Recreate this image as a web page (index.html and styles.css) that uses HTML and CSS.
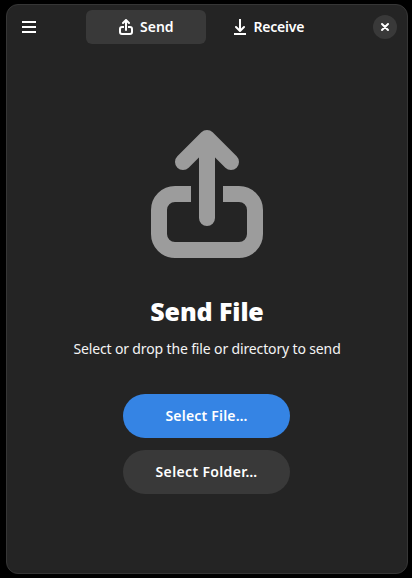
FILE: index.html
```html
<!DOCTYPE html>
<html lang="en">
<head>
<meta charset="utf-8">
<title>Send File</title>
<link rel="stylesheet" href="styles.css">
</head>
<body>
<svg width="0" height="0" class="defs">
  <symbol id="share" viewBox="0 0 16 16">
    <g fill="none" stroke="currentColor" stroke-width="2">
      <path d="M8 11V1M5 4l3-3 3 3" stroke-linecap="round" stroke-linejoin="round"/>
      <path d="M6 8H4a2 2 0 0 0-2 2v3a2 2 0 0 0 2 2h8a2 2 0 0 0 2-2v-3a2 2 0 0 0-2-2h-2"/>
    </g>
  </symbol>
</svg>
<main class="window">
  <header class="header">
    <button class="menu" aria-label="Menu"><svg width="16" height="16" viewBox="0 0 16 16"><path d="M1 2h14v2H1zM1 7h14v2H1zM1 12h14v2H1z" fill="currentColor"/></svg></button>
    <nav class="tabs">
      <button class="tab active"><svg width="16" height="16"><use href="#share"/></svg><span class="send">Send</span></button>
      <button class="tab"><svg width="16" height="16" viewBox="0 0 16 16"><path d="M8 0v11M4 8l4 4 4-4" fill="none" stroke="currentColor" stroke-width="2" stroke-linejoin="round" stroke-linecap="round"/><path d="M2 14h12v2H2z" fill="currentColor"/></svg><span class="receive">Receive</span></button>
    </nav>
    <button class="close" aria-label="Close"><svg width="16" height="16" viewBox="0 0 16 16"><path d="M5 5l6 6M11 5l-6 6" stroke="currentColor" stroke-width="2" stroke-linecap="round"/></svg></button>
  </header>
  <section class="page">
    <svg class="hero" width="128" height="128"><use href="#share"/></svg>
    <h1 class="title">Send File</h1>
    <p class="description">Select or drop the file or directory to send</p>
    <div class="actions">
      <button class="pill primary">Select File…</button>
      <button class="pill folder">Select Folder…</button>
    </div>
  </section>
</main>
</body>
</html>
```
FILE: styles.css
```css
* { box-sizing: border-box; }
body {
  margin: 0;
  padding: 4px 4px 4px 6px;
  height: 578px;
  background: #000;
  color: #fff;
  font: 14px/20px "Noto Sans", sans-serif;
  overflow: hidden;
}
button { border: 0; padding: 0; color: inherit; background: none; font: inherit; font-weight: 600; white-space: nowrap; }
svg { display: block; flex: none; }
.defs { position: absolute; }
.window {
  height: 570px;
  border: 1px solid #363636;
  border-radius: 12px;
  background: #242424;
}
.header { display: flex; align-items: center; height: 44px; padding: 0 10px 0 14px; }
.menu { width: 16px; height: 16px; }
.tabs { display: flex; margin-left: 49px; }
.tab { display: flex; align-items: center; justify-content: center; gap: 6px; width: 120px; height: 34px; border-radius: 6px; }
.tab + .tab { margin-left: 3px; }
.active { background: #393939; }
.tab span { display: block; text-align: left; }
.send { width: 34px; }
.receive { width: 53px; letter-spacing: -.2px; }
.close { display: flex; align-items: center; justify-content: center; width: 24px; height: 24px; margin-left: auto; border-radius: 50%; background: #393939; }
.page { display: flex; flex-direction: column; align-items: center; padding-top: 81px; }
.hero { color: #9c9c9c; }
.title { margin: 35px 0 0; font-size: 25px; line-height: 36px; font-weight: 900; letter-spacing: -.1px; white-space: nowrap; }
.description { margin: 10px 0 0; line-height: 20px; color: #f4f4f4; letter-spacing: -.14px; white-space: nowrap; }
.actions { display: flex; flex-direction: column; gap: 12px; margin-top: 35px; padding-right: 1px; }
.pill { width: 167px; height: 44px; border-radius: 22px; background: #393939; letter-spacing: .35px; }
.primary { background: #3584e4; letter-spacing: .2px; }
```
